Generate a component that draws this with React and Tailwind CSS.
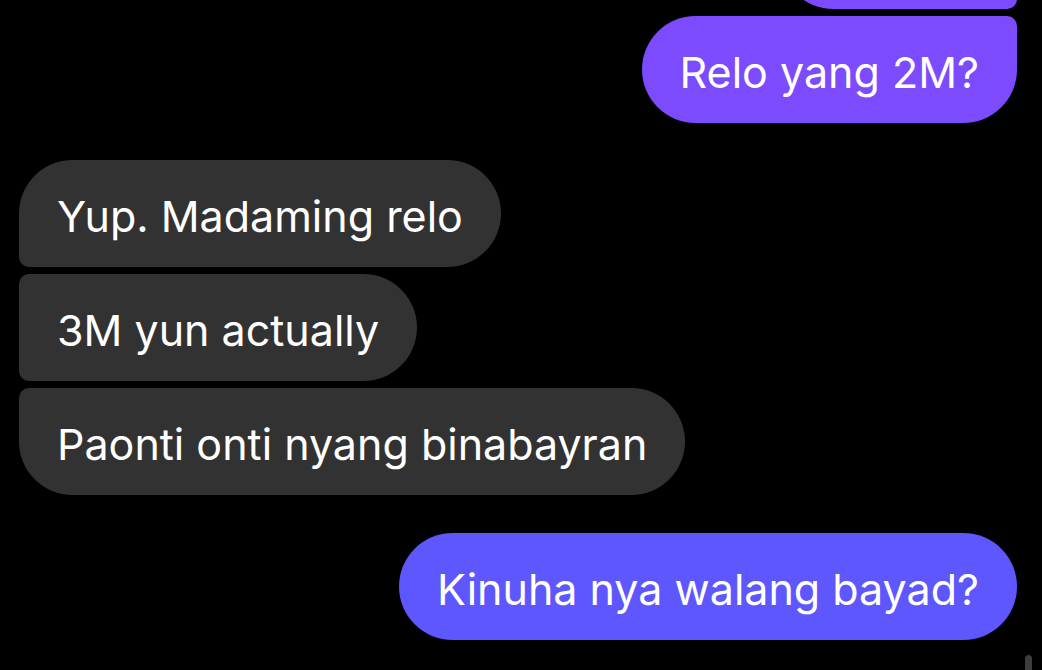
import React from "react";

const Bubble = ({ text, className }) => (
  <div
    className={
      "h-[107px] flex items-center px-[38px] pt-[6px] text-[43px] text-white whitespace-nowrap " +
      className
    }
  >
    {text}
  </div>
);

export default function App() {
  return (
    <div
      className="w-[1042px] h-[670px] bg-black overflow-hidden relative"
      style={{ fontFamily: "Inter, 'Noto Sans', sans-serif" }}
    >
      <div className="flex flex-col pl-[19px] pr-[25px]">
        {/* outgoing group */}
        <div className="flex flex-col items-end gap-[7px] -mt-[98px]">
          <div className="h-[107px] w-[237px] bg-[#7c4bfe] rounded-[54px] rounded-tr-[10px] rounded-br-[10px]" />
          <Bubble
            text="Relo yang 2M?"
            className="bg-[#7c4bfe] rounded-[54px] rounded-tr-[10px]"
          />
        </div>

        {/* incoming group */}
        <div className="flex flex-col items-start gap-[7px] mt-[37px]">
          <Bubble
            text="Yup. Madaming relo"
            className="bg-[#323232] rounded-[54px] rounded-bl-[10px]"
          />
          <Bubble
            text="3M yun actually"
            className="bg-[#323232] rounded-[54px] rounded-tl-[10px] rounded-bl-[10px]"
          />
          <Bubble
            text="Paonti onti nyang binabayran"
            className="bg-[#323232] rounded-[54px] rounded-tl-[10px]"
          />
        </div>

        <div className="flex flex-col items-end mt-[38px]">
          <Bubble text="Kinuha nya walang bayad?" className="bg-[#5e57fe] rounded-[54px]" />
        </div>
      </div>

      {/* scroll indicator */}
      <div className="absolute right-[10px] bottom-0 w-[7px] h-[15px] rounded-t-full bg-[#3d3d3d]" />
    </div>
  );
}
